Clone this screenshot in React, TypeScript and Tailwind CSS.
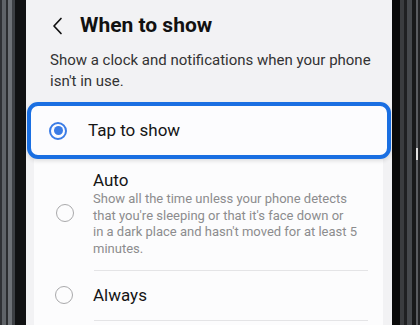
import React from "react";

function Radio({ checked }: { checked?: boolean }) {
  if (checked) {
    return (
      <div className="w-[18px] h-[18px] rounded-full border-[2px] border-[#3b7ce6] flex items-center justify-center shrink-0">
        <div className="w-[9px] h-[9px] rounded-full bg-[#3b7ce6]" />
      </div>
    );
  }
  return <div className="w-[18px] h-[18px] rounded-full border-[1.5px] border-[#a9a9ab] shrink-0" />;
}

export default function App() {
  return (
    <div
      className="w-[420px] h-[325px] flex overflow-hidden bg-black"
      style={{ fontFamily: "Roboto, 'Noto Sans', sans-serif" }}
    >
      {/* left frame */}
      <div className="flex h-full shrink-0">
        <div className="w-[2px] bg-[#2f3135]" />
        <div className="w-[4px] bg-[#5f6368]" />
        <div className="w-[2px] bg-[#2b2d30]" />
        <div className="w-[4px] bg-[#6d7176]" />
        <div className="w-[3px] bg-[#3d4044]" />
        <div className="w-[11px] bg-[#111213]" />
      </div>

      {/* screen */}
      <div className="w-[366px] h-full bg-[#f2f2f4] flex flex-col shrink-0">
        <div className="h-[50px] flex items-center pt-[1px]">
          <svg width="11" height="18" viewBox="0 0 11 18" className="ml-[26px] mr-[17px]">
            <polyline points="9,1.5 2,9 9,16.5" fill="none" stroke="#111" strokeWidth="1.7" strokeLinecap="round" strokeLinejoin="round" />
          </svg>
          <span className="text-[21px] font-bold text-[#111] leading-none">When to show</span>
        </div>
        <div className="pl-[24px] text-[15px] leading-[21px] text-[#333] h-[52px]">
          Show a clock and notifications when your phone
          <br />
          isn't in use.
        </div>
        <div className="relative z-10 mx-[1px] h-[57px] rounded-[11px] border-[4px] border-[#1a6fe2] bg-[#fcfcfe] flex items-center shadow-[0_2px_4px_rgba(0,0,0,0.12)]">
          <div className="ml-[18px]">
            <Radio checked />
          </div>
          <span className="ml-[21px] text-[17px] text-[#151515]">Tap to show</span>
        </div>
        <div className="flex-1 ml-[8px] mr-[9px] bg-[#fcfcfd] flex flex-col">
          <div className="flex items-center pt-[10px] pb-[12px]">
            <div className="ml-[22px] mt-[-1px]">
              <Radio />
            </div>
            <div className="ml-[19px]">
              <div className="text-[17px] leading-[22px] text-[#151515]">Auto</div>
              <div className="text-[13px] leading-[16.7px] text-[#8c8c8e] whitespace-nowrap">
                Show all the time unless your phone detects
                <br />
                that you're sleeping or that it's face down or
                <br />
                in a dark place and hasn't moved for at least 5
                <br />
                minutes.
              </div>
            </div>
          </div>
          <div className="ml-[60px] mr-[15px] h-[1px] bg-[#e4e4e6]" />
          <div className="h-[49px] flex items-center">
            <div className="ml-[21px]">
              <Radio />
            </div>
            <span className="ml-[20px] text-[17px] text-[#151515]">Always</span>
          </div>
          <div className="ml-[60px] mr-[15px] h-[1px] bg-[#e4e4e6]" />
        </div>
      </div>

      {/* right frame */}
      <div className="flex h-full shrink-0">
        <div className="w-[8px] bg-[#0a0a0a]" />
        <div className="w-[4px] bg-[#3a3c3f]" />
        <div className="w-[3px] bg-[#1f2022]" />
        <div className="w-[5px] bg-[#45484c]" />
        <div className="w-[4px] bg-[#18191a]" />
        <div className="w-[2px] bg-[#5a5c60] flex flex-col">
          <div className="h-[148px]" />
          <div className="h-[12px] bg-[#e0e0e0]" />
        </div>
        <div className="w-[2px] bg-[#222325]" />
      </div>
    </div>
  );
}
